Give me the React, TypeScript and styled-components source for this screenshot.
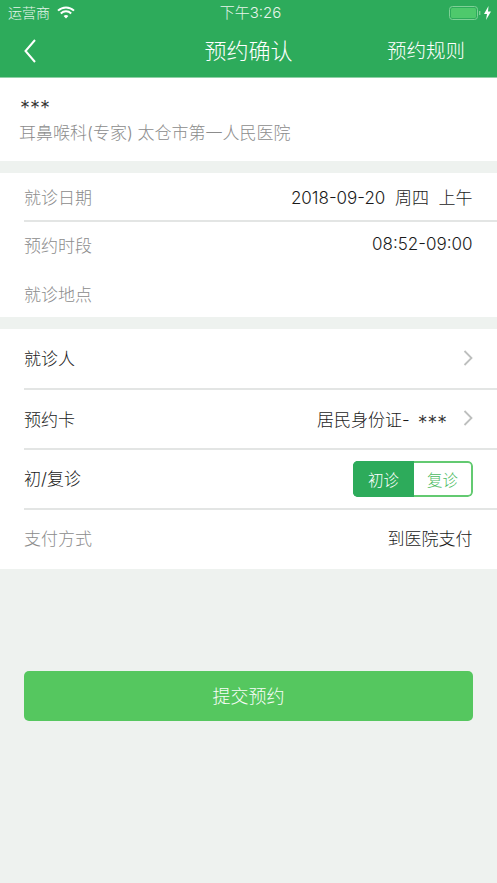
import React from "react";
import styled, { createGlobalStyle } from "styled-components";

const Global = createGlobalStyle`
  html, body { margin: 0; padding: 0; background: #eef2ef; }
  body { font-family: "Inter", "Noto Sans CJK SC", "Noto Sans", sans-serif; -webkit-font-smoothing: antialiased; }
`;

const Page = styled.div`
  width: 497px;
  height: 883px;
  background: #eef2ef;
  overflow: hidden;
  display: flex;
  flex-direction: column;
`;

const Header = styled.header`
  background: #2dab5b;
  height: 78px;
  box-sizing: border-box;
  border-bottom: 1px solid #8fd0a6;
  color: #fff;
  flex: none;
`;

const StatusBar = styled.div`
  height: 25px;
  display: grid;
  grid-template-columns: 1fr auto 1fr;
  align-items: center;
  padding: 0 8px;
  font-size: 14px;
  color: #e6f5eb;
`;

const StatusLeft = styled.div`
  display: flex;
  align-items: center;
  gap: 7px;
  font-weight: 300;
  line-height: 25px;
`;

const StatusTime = styled.div`
  margin-left: 4px;
  font-size: 15px;
  font-weight: 300;
  line-height: 25px;
`;

const StatusRight = styled.div`
  display: flex;
  justify-content: flex-end;
  align-items: center;
  margin-right: -2px;
`;

const NavBar = styled.div`
  height: 52px;
  display: grid;
  grid-template-columns: 1fr auto 1fr;
  align-items: center;
  padding: 0 32px;
`;

const BackButton = styled.div`
  display: flex;
  align-items: center;
  margin-left: -8px;
`;

const NavTitle = styled.div`
  font-size: 22px;
  font-weight: 300;
  line-height: 30px;
`;

const NavAction = styled.div`
  font-size: 19.5px;
  font-weight: 300;
  text-align: right;
  line-height: 30px;
`;

const DoctorCard = styled.section`
  background: #fff;
  height: 83px;
  padding: 12px 18px 0 20px;
  box-sizing: border-box;
  margin-bottom: 12px;
  flex: none;
`;

const Stars = styled.span`
  display: inline-block;
  font-size: 20px;
  font-weight: 300;
  line-height: 20px;
  padding-top: 8px;
  color: #333;
`;

const DoctorName = styled.div`
  height: 29px;
  line-height: 20px;
`;

const DoctorDept = styled.div`
  margin-left: -1px;
  margin-top: 1px;
  font-size: 17px;
  font-weight: 300;
  line-height: 26px;
  color: #8c8c8c;
`;

const Group = styled.section`
  background: #fff;
  margin-bottom: 12px;
  flex: none;
`;

const Row = styled.div<{ $h: number; $last?: boolean; $pb?: number }>`
  height: ${(p) => p.$h}px;
  box-sizing: border-box;
  margin-left: 24px;
  padding-right: 24px;
  padding-bottom: ${(p) => p.$pb ?? 0}px;
  display: flex;
  align-items: center;
  justify-content: space-between;
  border-bottom: ${(p) => (p.$last ? "none" : "2px solid #e3e5e4")};
`;

const Label = styled.div<{ $muted?: boolean; $raised?: boolean }>`
  font-size: 17px;
  font-weight: 300;
  padding-bottom: ${(p) => (p.$raised ? 3 : 0)}px;
  color: ${(p) => (p.$muted ? "#8c8c8c" : "#1a1a1a")};
`;

const Value = styled.div`
  font-size: 17px;
  font-weight: 300;
  color: #1a1a1a;
  white-space: pre;
  display: flex;
  align-items: center;
  margin-right: 0.5px;
`;

const CardValue = styled(Value)`
  margin-right: 0;
`;

const CardStars = styled(Stars)`
  margin-left: 8px;
  padding-top: 10px;
  font-size: 19.5px;
`;

const Chevron = styled.svg`
  display: block;
  margin-left: 14px;
`;

const Segment = styled.div`
  display: flex;
  width: 120px;
  height: 36px;
  border-radius: 5px;
  overflow: hidden;
`;

const SegmentItem = styled.div<{ $active?: boolean }>`
  flex: 1;
  display: flex;
  align-items: center;
  justify-content: center;
  box-sizing: border-box;
  border: 2px solid ${(p) => (p.$active ? "#2dab5b" : "#63ca71")};
  border-left-width: ${(p) => (p.$active ? 2 : 0)}px;
  border-radius: ${(p) => (p.$active ? "0" : "0 5px 5px 0")};
  font-size: 15.5px;
  font-weight: 300;
  background: ${(p) => (p.$active ? "#2dab5b" : "#fff")};
  color: ${(p) => (p.$active ? "#fff" : "#4cbb62")};
`;

const SubmitWrap = styled.div`
  padding: 90px 24px 0;
`;

const Submit = styled.button`
  display: block;
  width: 100%;
  height: 50px;
  border: 0;
  border-radius: 5px;
  padding: 0 0 2px;
  background: #55c75f;
  color: #f8fdf8;
  font-family: inherit;
  font-size: 18px;
  font-weight: 300;
`;

const RowChevron = () => (
  <Chevron width="12" height="18" viewBox="0 0 12 18" fill="none">
    <path d="M3.5 2 L10.5 9 L3.5 16" stroke="#bdbfbe" strokeWidth="1.8" />
  </Chevron>
);

const Wifi = () => (
  <svg width="18" height="13" viewBox="0 0 18 13" fill="none">
    <path d="M1 4.6 C5.5 .3 12.5 .3 17 4.6" stroke="#fff" strokeWidth="2" />
    <path d="M3.8 7.4 C6.8 4.6 11.2 4.6 14.2 7.4" stroke="#fff" strokeWidth="2" />
    <path d="M6.6 10 C8 8.8 10 8.8 11.4 10 L9 12.6 Z" fill="#fff" />
  </svg>
);

const Battery = () => (
  <svg width="42" height="14" viewBox="0 0 42 14" fill="none">
    <rect x="0.5" y="0.5" width="28" height="13" rx="3" stroke="#7fd097" />
    <rect x="2" y="2" width="25" height="10" rx="1.5" fill="#4ec96c" />
    <rect x="30" y="5" width="1.4" height="4" fill="#7fd097" />
    <path d="M39.5 0 L35 8 H38 L37 14 L42 5.6 H39 Z" fill="#fff" />
  </svg>
);

export default function App() {
  return (
    <Page>
      <Global />
      <Header>
        <StatusBar>
          <StatusLeft>
            运营商
            <Wifi />
          </StatusLeft>
          <StatusTime>下午3:26</StatusTime>
          <StatusRight>
            <Battery />
          </StatusRight>
        </StatusBar>
        <NavBar>
          <BackButton>
            <svg width="12" height="24" viewBox="0 0 12 24" fill="none">
              <path d="M11 1 L1.5 12 L11 23" stroke="#fff" strokeWidth="2" />
            </svg>
          </BackButton>
          <NavTitle>预约确认</NavTitle>
          <NavAction>预约规则</NavAction>
        </NavBar>
      </Header>
      <DoctorCard>
        <DoctorName>
          <Stars>***</Stars>
        </DoctorName>
        <DoctorDept>耳鼻喉科(专家) 太仓市第一人民医院</DoctorDept>
      </DoctorCard>
      <Group>
        <Row $h={49}>
          <Label $muted>就诊日期</Label>
          <Value>2018-09-20  周四  上午</Value>
        </Row>
        <Row $h={47} $last $pb={3}>
          <Label $muted>预约时段</Label>
          <Value>08:52-09:00</Value>
        </Row>
        <Row $h={48} $last>
          <Label $muted>就诊地点</Label>
        </Row>
      </Group>
      <Group>
        <Row $h={61} $pb={2}>
          <Label>就诊人</Label>
          <RowChevron />
        </Row>
        <Row $h={60} $pb={2}>
          <Label>预约卡</Label>
          <CardValue>
            居民身份证-
            <CardStars>***</CardStars>
            <RowChevron />
          </CardValue>
        </Row>
        <Row $h={60}>
          <Label $raised>初/复诊</Label>
          <Segment>
            <SegmentItem $active>初诊</SegmentItem>
            <SegmentItem>复诊</SegmentItem>
          </Segment>
        </Row>
        <Row $h={59} $last $pb={4}>
          <Label $muted>支付方式</Label>
          <Value>到医院支付</Value>
        </Row>
      </Group>
      <SubmitWrap>
        <Submit>提交预约</Submit>
      </SubmitWrap>
    </Page>
  );
}
